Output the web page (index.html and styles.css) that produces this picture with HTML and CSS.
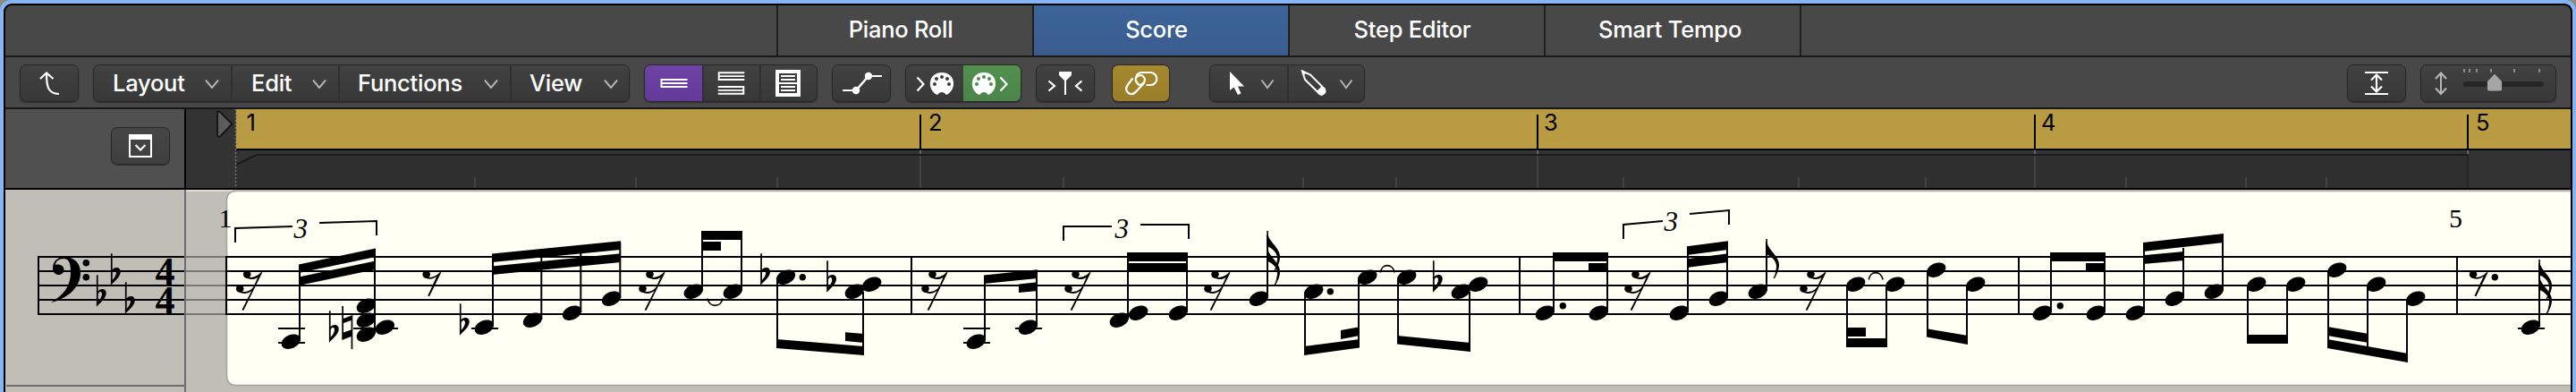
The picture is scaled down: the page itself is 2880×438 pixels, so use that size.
FILE: index.html
```html
<!DOCTYPE html>
<html lang="en">
<head>
<meta charset="utf-8">
<title>Score Editor</title>
<link rel="stylesheet" href="styles.css">
</head>
<body>
<div class="focus-ring">
<div class="editor">
  <nav class="tabs">
    <div class="tab">Piano Roll</div>
    <div class="tab tab-active">Score</div>
    <div class="tab">Step Editor</div>
    <div class="tab">Smart Tempo</div>
  </nav>

  <div class="toolbar">
    <div class="group g-up">
      <svg class="icon" viewBox="23 73 64 40"><path d="M45 88 L52 81.5 L59.500 88 M52 82 C52 98 54 104.500 66 105" fill="none" stroke="#fff" stroke-width="2.200"/></svg>
    </div>
    <div class="group g-menus">
      <div class="menu m-layout"><span>Layout</span><svg class="chev" viewBox="0 0 16 10"><path d="M1 0.500 L8 9 L15 0.500"/></svg></div>
      <div class="menu m-edit"><span>Edit</span><svg class="chev" viewBox="0 0 16 10"><path d="M1 0.500 L8 9 L15 0.500"/></svg></div>
      <div class="menu m-functions"><span>Functions</span><svg class="chev" viewBox="0 0 16 10"><path d="M1 0.500 L8 9 L15 0.500"/></svg></div>
      <div class="menu m-view"><span>View</span><svg class="chev" viewBox="0 0 16 10"><path d="M1 0.500 L8 9 L15 0.500"/></svg></div>
    </div>
    <div class="group g-pages">
      <svg class="icon on-purple" viewBox="721 73 63 40"><path d="M739 88V98M738 89H768M738 93H768M738 97H768" stroke="#fff" stroke-width="2"/></svg>
      <svg class="icon seg" viewBox="784 73 65 40"><path d="M803 80V90M802 81H832M802 85H832M802 89H832M831 96V106M802 97H832M802 101H832M802 105H832" stroke="#fff" stroke-width="2"/></svg>
      <svg class="icon seg" viewBox="849 73 64 40"><path d="M867 78H895V108H867Z" fill="#fff"/><path d="M871 82H891V92H871ZM871 94H891V104H871Z" fill="#3b3b3b"/><path d="M873 85H889M873 89H889M873 97H889M873 101H889" stroke="#fff" stroke-width="2"/></svg>
    </div>
    <div class="group g-auto">
      <svg class="icon" viewBox="931 73 64 40"><path d="M942 101H957M971 85H986" stroke="#fff" stroke-width="2"/><path d="M957 101L971 85" stroke="#fff" stroke-width="2.500"/><circle cx="957" cy="101" r="4.200" fill="#fff"/><circle cx="971" cy="85" r="4.200" fill="#fff"/></svg>
    </div>
    <div class="group g-midi">
      <svg class="icon" viewBox="1013 73 64 40"><path d="M1025.500 86.500L1032.500 94L1025.500 101.500" fill="none" stroke="#fff" stroke-width="2.200"/><path d="M1048 106C1036 101 1037 81 1053 81S1070 101 1058 106L1056 104Q1053 102 1050 104Z" fill="#fff"/><g fill="#3b3b3b"><circle cx="1045" cy="94" r="2"/><circle cx="1047" cy="88" r="2"/><circle cx="1053" cy="86" r="2"/><circle cx="1059" cy="88" r="2"/><circle cx="1061" cy="94" r="2"/></g></svg>
      <svg class="icon on-green" viewBox="1077 73 64 40"><path d="M1118.500 86.500L1125.500 94L1118.500 101.500" fill="none" stroke="#fff" stroke-width="2.200"/><path d="M1095 106C1083 101 1084 81 1100 81S1117 101 1105 106L1103 104Q1100 102 1097 104Z" fill="#fff"/><g fill="#4e8b4c"><circle cx="1092" cy="94" r="2"/><circle cx="1094" cy="88" r="2"/><circle cx="1100" cy="86" r="2"/><circle cx="1106" cy="88" r="2"/><circle cx="1108" cy="94" r="2"/></g></svg>
    </div>
    <div class="group g-playhead">
      <svg class="icon" viewBox="1159 73 64 40"><path d="M1172.500 90.500L1179 96L1172.500 101.500M1209.500 90.500L1203 96L1209.500 101.500" fill="none" stroke="#fff" stroke-width="2.200"/><path d="M1184 80H1198V84L1192 90V106H1190V90L1184 84Z" fill="#fff"/></svg>
    </div>
    <div class="group g-link">
      <svg class="icon on-gold" viewBox="1244 73 63 40"><g fill="none" stroke="#fff" stroke-width="2.200" stroke-linecap="round"><path d="M1282.500 95H1286A7 7 0 0 0 1286.500 81H1277C1270 81 1267 90 1273 94.500Q1276 96 1279 92"/><path d="M1266 88L1261 94.500C1256 101.500 1263 108 1269 103.500L1278 94C1283 87 1276 81 1271 86"/></g></svg>
    </div>
    <div class="group g-tools">
      <svg class="icon" viewBox="1353 73 86 40"><path d="M1375 80V101L1379.500 97.500L1384 106L1387.500 104.500L1384 96.500H1391Z" fill="#fff"/><path d="M1410.500 89.500L1417 98L1423.500 89.500" fill="none" stroke="#b4b4b4" stroke-width="2"/></svg>
      <svg class="icon seg" viewBox="1439 73 86 40"><path d="M1456 79.500L1465 83.500L1481 99.500L1475.500 105L1459 89Z" fill="none" stroke="#fff" stroke-width="2"/><path d="M1456 79L1460.500 81L1457.500 84ZM1478 96L1482.500 101Q1483 105 1477.500 107Q1475 106.500 1472 102Z" fill="#fff"/><path d="M1498.500 89.500L1505 98L1511.500 89.500" fill="none" stroke="#b4b4b4" stroke-width="2"/></svg>
    </div>
    <div class="group g-fit">
      <svg class="icon" viewBox="2625 73 64 40"><path d="M2644 81H2670M2644 105H2670M2657 84V102M2651 89.500L2657 83.500L2663 89.500M2651 96.500L2657 102.500L2663 96.500" fill="none" stroke="#fff" stroke-width="2.200"/></svg>
    </div>
    <div class="group g-zoom">
      <svg class="icon" viewBox="2707 73 150 40"><path d="M2729 82V104M2723 88L2729 81.500L2735 88M2723 98.500L2729 105L2735 98.500" fill="none" stroke="#b8b8b8" stroke-width="2"/><rect x="2754" y="91" width="90" height="6" rx="3" fill="#262626"/><path d="M2755 77V81M2761 77V81M2769 77V81M2785 77V81M2811 77V81M2839 77V81" stroke="#8a8a8a" stroke-width="2"/><path d="M2789 82L2797.500 91V100Q2797.500 102 2795 102H2783Q2780.500 102 2780.500 100V91Z" fill="#a5a5a5" stroke="#2a2a2a" stroke-width="0.800"/></svg>
    </div>
  </div>

  <div class="ruler">
    <div class="ruler-side">
      <div class="group g-hide">
        <svg class="icon" viewBox="125 143 64 40"><path d="M145 151H169V175H145Z" fill="none" stroke="#fff" stroke-width="2"/><path d="M144 150H170V156H144Z" fill="#fff"/><path d="M151.500 162L157 167.500L162.500 162" fill="none" stroke="#fff" stroke-width="2"/></svg>
      </div>
    </div>
    <svg class="ruler-track" viewBox="208 122 2666 88">
      <path d="M264 122H2874V166H264Z" fill="#b99b43"/>
      <path d="M264 184L287 173H2759V210H264Z" fill="#2f2f2f"/>
      <path d="M264 184L287 173H2759" fill="none" stroke="#1b1b1b" stroke-width="2"/>
      <path d="M2759 173V210" stroke="#222" stroke-width="1.500"/>
      <path d="M264 167H2874" stroke="#000" stroke-width="2"/>
      <path d="M263.500 122V210" stroke="#777" stroke-width="1.500" stroke-dasharray="2 2"/>
      <path d="M243 126Q243 124 246 125L259.500 138.500L246 152.500Q243 153.500 243 151Z" fill="#5c5c5c" stroke="#161616" stroke-width="2"/>
      <path d="M1029 128V166M1719 128V166M2275 128V166M2759 128V166" stroke="#000" stroke-width="2"/>
      <path d="M1029 168V172M1719 168V172M2275 168V172M2759 168V172" stroke="#666" stroke-width="2"/>
      <path d="M1029 174V210M1719 174V210M2275 174V210M531 198V210M711 198V210M869 198V210M1189 198V210M1457 198V210M1561 198V210M1815 198V210M2011 198V210M2153 198V210M2377 198V210M2511 198V210M2601 198V210" stroke="#434343" stroke-width="2"/>
      <g class="bar-label">
        <text x="275.500" y="146">1</text><text x="1038" y="146">2</text><text x="1726" y="146">3</text><text x="2282" y="146">4</text><text x="2768" y="146">5</text>
      </g>
    </svg>
  </div>

  <div class="score">
    <svg class="staff-head" viewBox="6 212 200 226">
      <path d="M42 287H206M42 303H206M42 319H206M42 335H206M42 351H206M43 286V352" stroke="#000" stroke-width="2" fill="none"/>
      <path d="M7 431H206" stroke="#6c6c6c" stroke-width="2"/>
      <path d="M59 300C59 292 64 287.300 72 287.300C84 287.300 90 295 90 305C90 322 74 334 57 338C70 330 79 321 79 304C79 294 77 289 71 289C66 289 62 292 62 296C69 294 72 299 71.500 302C71 309 59 309 59 300Z"/>
      <circle cx="96.300" cy="293.700" r="3.800"/><circle cx="96.300" cy="309.700" r="3.800"/>
      <use href="#flat" x="108.700" y="325.700"/><use href="#flat" x="124.700" y="301.700"/><use href="#flat" x="140.700" y="333.700"/>
      <g class="meter"><text x="173.500" y="318">4</text><text x="173.500" y="350">4</text></g>
    </svg>

    <svg class="staff-page" viewBox="208 212 2666 226">
      <defs>
        <ellipse id="n" rx="11.300" ry="7.500" transform="rotate(-24)"/>
        <path id="flat" fill-rule="evenodd" d="M-0.800 -18.500H0.900V-0.500C4 -4 10.500 -3.500 10 2.500C9.500 8 3 13 -0.800 17ZM1 3V11C4 8 5.500 5 5.200 2C4.500 -1 1.500 0 1 3Z"/>
        <g id="r8"><circle cx="-16" cy="306.500" r="4.300"/><path d="M-17 309C-12 311.500 -5 309 -0.700 304L0.500 304.500L-12.700 331.300L-14.500 330.500L-4.500 309C-8 311.500 -13 313 -18 310Z"/></g>
        <g id="r16"><circle cx="-16.500" cy="306.500" r="4.300"/><circle cx="-24.500" cy="322.500" r="4.300"/><path d="M-17 309C-12 311.500 -5 309 -0.700 304L0.500 304.500L-20.500 347L-22.300 346.300L-11.500 325C-16 328.500 -21 329 -26 326L-24 325C-18 327.500 -12 325 -9 320L-4.500 310C-8 312.500 -13 313 -18 310Z"/></g>
        <path id="f" d="M-0.700 -1V16C7 19 13 25 10.500 34Q10 39 7.500 43L9 43C13 36 15.500 29 13 23C10.500 16 2 10 0.900 4V-1Z"/>
      </defs>

      <path d="M208 213H260" stroke="#dcdbd5" stroke-width="2"/>
      <path d="M2880 213.500H264Q253.500 213.500 253.500 224V420Q253.500 430.500 264 430.500H2880Z" fill="#fffff4" stroke="#a3a39d" stroke-width="1.500"/>
      <path d="M262 213H2874" stroke="#b5b4ae" stroke-width="2"/>
      <path d="M208 287H252M208 303H252M208 319H252M208 335H252M208 351H252" stroke="#777773" stroke-width="2"/>
      <path d="M253 287H2874M253 303H2874M253 319H2874M253 335H2874M253 351H2874" stroke="#000" stroke-width="2"/>
      <path d="M253 286V352M1019 287V351M1699 287V351M2257 287V351M2747 287V351" stroke="#000" stroke-width="2"/>

      <g class="measure-no"><text x="244.500" y="254">1</text><text x="2738" y="254">5</text></g>
      <g class="tuplet-no"><text x="328.500" y="265.500">3</text><text x="1246.500" y="265.500">3</text><text x="1860.500" y="257.500">3</text></g>
      <path class="line" d="M263 271V255L327 253M357 249L421 247V263M1189 269V253H1243M1275 251H1329V267M1815 267V251L1859 247M1889 239L1933 235V251"/>

      <!-- ledger lines -->
      <path class="line" d="M311 367H341M311 383H341M395 367H445M527 367H557M1077 367H1107M1077 383H1107M1135 367H1165M2815 367H2845"/>

      <!-- stems -->
      <path class="line" d="M335 297V381M419 279V373M551 285V365M605.300 281V357M649.300 277V349M693.300 271V333M785 259V325M829 259V325M869 310V386M965 326V395
        M1101 309V381M1159 303V365M1261 283V357M1327 283V349M1417 262.500V333M1459 326V395M1519 310V387M1563 310V383M1643 326V391
        M1737 283V349M1797 283V349M1887 277V349M1931 271V333M1975 270.500V325M2065 318V387M2109 318V387M2155 302V375M2199 318V383
        M2293 283V349M2353 283V349M2397 273V349M2441 277V333M2485 263V325M2513 318V383M2557 318V383M2603 302V387M2647 318V388M2691 334V403M2839 294.500V365"/>

      <!-- beams -->
      <path d="M334 295.500L420 277.500V287L334 305ZM334 309.500L420 291.500V301L334 319Z
        M550 283.500L694 269.300V279L550 293ZM550 297.500L694 283.300V293L550 307Z
        M784 258H830V268H784ZM784 270H806V280H784Z
        M868 379L966 387V397L868 389ZM945 371.300L966 373V383L945 381Z
        M1100 307.500L1160 301.300V311L1100 317ZM1139 317.500L1160 315.300V325L1139 327Z
        M1260 282H1328V292H1260ZM1260 294H1328V304H1260Z
        M1458 387L1520 379V388.500L1458 397ZM1499 369L1520 365.300V375L1499 379Z
        M1562 375L1644 383V393L1562 384.500Z
        M1736 282H1798V292H1736ZM1776 294H1798V304H1776Z
        M1886 275.300L1932 269.300V279L1886 285ZM1886 289.300L1932 283.300V293L1886 299Z
        M2064 378H2110V388H2064ZM2064 366H2086V376H2064Z
        M2154 367.300L2200 375V385L2154 376.500Z
        M2292 282H2354V292H2292ZM2332 294H2354V304H2332Z
        M2396 271L2486 261V271L2396 281ZM2396 285.300L2442 281V291L2396 295Z
        M2512 374H2558V384H2512Z
        M2602 379L2692 395V405L2602 389ZM2602 365L2648 373V383L2602 375Z"/>

      <!-- note heads -->
      <use href="#n" x="325.300" y="381.700"/><use href="#n" x="409.300" y="341.700"/><use href="#n" x="409.300" y="357.700"/><use href="#n" x="409.300" y="373.700"/><use href="#n" x="430.300" y="365.700"/>
      <use href="#n" x="541.300" y="365.700"/><use href="#n" x="595.500" y="357.700"/><use href="#n" x="639.500" y="349.700"/><use href="#n" x="683.500" y="333.700"/>
      <use href="#n" x="775.300" y="325.700"/><use href="#n" x="819.300" y="325.700"/><use href="#n" x="878.500" y="309.700"/><use href="#n" x="955.300" y="325.700"/><use href="#n" x="974.700" y="317.700"/>
      <use href="#n" x="1091.300" y="381.700"/><use href="#n" x="1149.300" y="365.700"/><use href="#n" x="1251.300" y="357.700"/><use href="#n" x="1272.600" y="349.700"/><use href="#n" x="1317.300" y="349.700"/><use href="#n" x="1407.300" y="333.700"/>
      <use href="#n" x="1468.700" y="325.700"/><use href="#n" x="1528.700" y="309.700"/><use href="#n" x="1572.700" y="309.700"/><use href="#n" x="1633.300" y="325.700"/><use href="#n" x="1652.700" y="317.700"/>
      <use href="#n" x="1727.300" y="349.700"/><use href="#n" x="1787.300" y="349.700"/><use href="#n" x="1877.300" y="349.700"/><use href="#n" x="1921.300" y="333.700"/><use href="#n" x="1965.300" y="325.700"/>
      <use href="#n" x="2074.700" y="317.700"/><use href="#n" x="2118.700" y="317.700"/><use href="#n" x="2164.700" y="301.700"/><use href="#n" x="2208.700" y="317.700"/>
      <use href="#n" x="2283.300" y="349.700"/><use href="#n" x="2343.300" y="349.700"/><use href="#n" x="2387.300" y="349.700"/><use href="#n" x="2431.300" y="333.700"/><use href="#n" x="2475.300" y="325.700"/>
      <use href="#n" x="2522.700" y="317.700"/><use href="#n" x="2566.700" y="317.700"/><use href="#n" x="2612.700" y="301.700"/><use href="#n" x="2656.700" y="317.700"/><use href="#n" x="2700.700" y="333.700"/><use href="#n" x="2829.300" y="365.700"/>

      <!-- augmentation dots -->
      <circle cx="897.300" cy="309.700" r="3.700"/><circle cx="1487.300" cy="325.700" r="3.700"/><circle cx="1747.300" cy="341.700" r="3.700"/><circle cx="2303.300" cy="341.700" r="3.700"/><circle cx="2789.300" cy="309.700" r="3.700"/>

      <!-- accidentals -->
      <use href="#flat" x="368.700" y="365.700"/><use href="#flat" x="514.700" y="357.700"/><use href="#flat" x="851" y="301.700"/><use href="#flat" x="925" y="309.700"/><use href="#flat" x="1602.700" y="309.700"/>
      <path fill-rule="evenodd" d="M382.300 342H384V356L394.300 352V390H392.600V376L382.300 380ZM384 361V371.500L392.600 368.500V358Z"/>

      <!-- rests -->
      <use href="#r16" x="292.700"/><use href="#r8" x="492.700"/><use href="#r16" x="743"/><use href="#r16" x="1059"/><use href="#r16" x="1219"/><use href="#r16" x="1375"/><use href="#r16" x="1845"/><use href="#r16" x="2041"/><use href="#r8" x="2781"/>

      <!-- flags -->
      <use href="#f" x="1417" y="259"/><use href="#f" x="1417" y="275.500"/><use href="#f" x="1975" y="268"/><use href="#f" x="2839" y="291"/><use href="#f" x="2839" y="307.500"/>

      <!-- ties -->
      <path class="tie" d="M791 333.500C793 344 806 344 808 333.500M1543.300 304.500C1545 294 1557 294 1559 304.500M2089.300 312.500C2091 302 2103 302 2105 312.500"/>
    </svg>
  </div>
</div>
</div>
</body>
</html>
```
FILE: styles.css
```css
* { box-sizing: border-box; }

body {
  margin: 0;
  width: 2880px;
  height: 438px;
  overflow: hidden;
  background: #8b8b8b;
  font-family: Inter, "Liberation Sans", sans-serif;
  color: #fff;
}

svg { display: block; }

.focus-ring {
  height: 438px;
  padding: 4px 4px 0;
  background: #85b5f2;
  border-radius: 12px 12px 0 0;
}

.editor {
  height: 434px;
  border: 2px solid #000;
  border-bottom: 0;
  border-radius: 9px 9px 0 0;
  overflow: hidden;
  background: #484848;
}

/* Editor tabs */
.tabs {
  display: flex;
  height: 58px;
  padding-left: 862px;
  border-bottom: 2px solid #1a1a1a;
}

.tab {
  width: 286px;
  padding-right: 10px;
  border-left: 2px solid #1f1f1f;
  text-align: center;
  font-size: 25.5px;
  font-weight: 500;
  line-height: 54px;
  letter-spacing: -0.25px;
}

.tab:last-child {
  width: 288px;
  padding-right: 6px;
  border-right: 2px solid #1f1f1f;
}

.tab-active { background: linear-gradient(#3c6499, #3a5c8d); }

/* Toolbar */
.toolbar {
  display: flex;
  align-items: flex-start;
  height: 58px;
  padding: 8px 16px 0;
  border-bottom: 2px solid #171717;
}

.group {
  display: flex;
  height: 42px;
  border: 1px solid #282828;
  border-radius: 7px;
  overflow: hidden;
  background: linear-gradient(#414141, #383838);
  box-shadow: 0 1px 1px #303030;
}

.icon { flex: 1 1 0; height: 40px; min-width: 0; }
.seg { box-shadow: inset 2px 0 #303030; }

.g-up { width: 66px; }
.g-menus { width: 600px; margin-left: 16px; }
.g-pages { width: 194px; margin-left: 16px; }
.g-auto { width: 66px; margin-left: 16px; }
.g-midi { width: 130px; margin-left: 16px; }
.g-playhead { width: 66px; margin-left: 16px; }
.g-link { width: 65px; margin-left: 19px; }
.g-tools { width: 174px; margin-left: 44px; }
.g-fit { width: 66px; margin-left: auto; }
.g-zoom { width: 152px; margin-left: 16px; }

.on-purple { background: linear-gradient(#6c42a5, #633a99); }
.on-green { background: linear-gradient(#529150, #4b8449); }
.on-gold { background: linear-gradient(#a5892e, #997d29); }

.menu {
  display: flex;
  align-items: center;
  justify-content: space-between;
  font-size: 25.5px;
  font-weight: 500;
  letter-spacing: -0.25px;
  line-height: 38px;
}

.menu + .menu { border-left: 2px solid #303030; }
.m-layout { width: 153px; padding: 0 13px 0 21px; }
.m-edit { width: 120px; padding: 0 13px 0 21px; }
.m-functions { width: 192px; padding: 0 13px 0 20px; }
.m-view { width: 133px; padding: 0 12px 0 20px; }

.chev { width: 16px; height: 10px; margin-top: 2px; }
.chev path { fill: none; stroke: #b4b4b4; stroke-width: 2; }

/* Ruler */
.ruler {
  display: flex;
  height: 90px;
  background: #333;
  border-bottom: 2px solid #000;
}

.ruler-side {
  width: 202px;
  padding: 20px 0 0 118px;
  background: #505050;
  border-right: 2px solid #000;
}

.g-hide { width: 66px; background: linear-gradient(#464646, #3f3f3f); }

.ruler-track { width: 2666px; height: 88px; }

.bar-label { font-size: 25.5px; fill: #000; }

/* Score */
.score {
  display: flex;
  height: 226px;
  background: #bfbeb7;
}

.staff-head { flex: none; width: 200px; height: 226px; }

.staff-page {
  flex: none;
  width: 2668px;
  height: 226px;
  border-left: 2px solid #6c6c6c;
}

.line { fill: none; stroke: #000; stroke-width: 2; }
.tie { fill: none; stroke: #000; stroke-width: 1.6; }

.meter {
  font: bold 44px "Liberation Serif", "Times New Roman", serif;
}

.measure-no {
  font: 30px "Liberation Serif", "Times New Roman", serif;
}

.tuplet-no {
  font: italic 31px "Liberation Serif", "Times New Roman", serif;
}
```
